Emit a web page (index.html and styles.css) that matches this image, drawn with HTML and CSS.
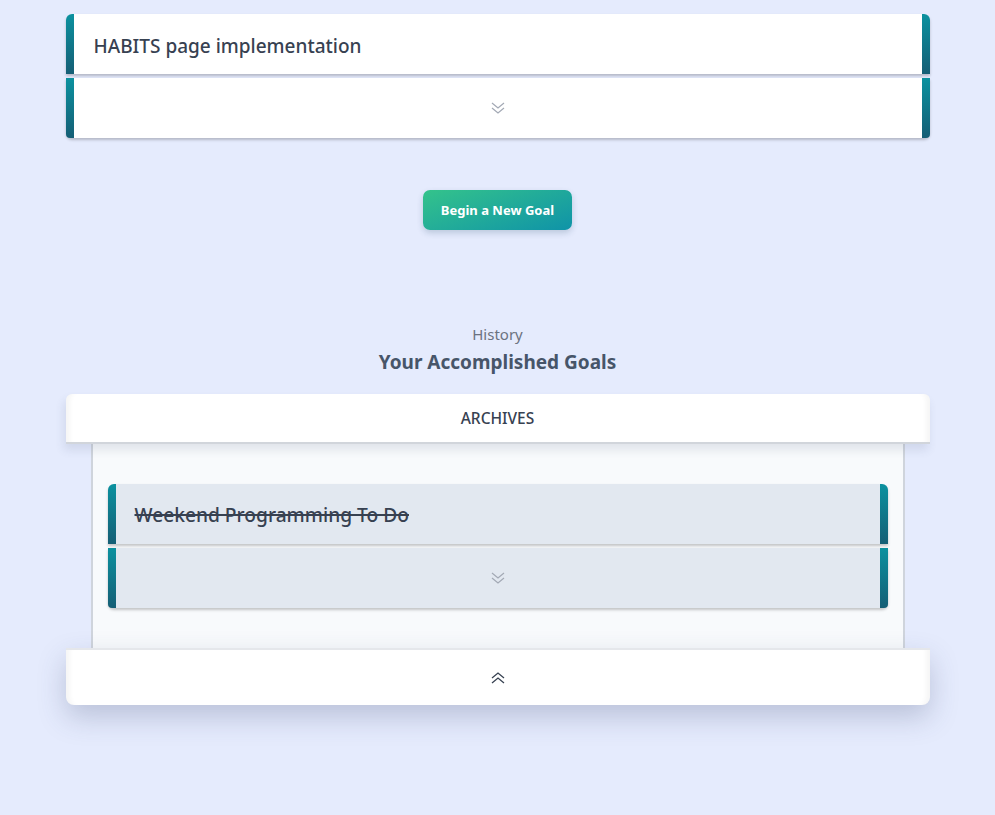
FILE: index.html
```html
<!DOCTYPE html>
<html>
<head>
<meta charset="utf-8">
<link rel="stylesheet" href="styles.css">
</head>
<body>
<main class="page">
  <section class="goal">
    <div class="goal-row goal-top">
      <span class="edge edge-left"></span>
      <div class="goal-body goal-head"><h2 class="goal-title">HABITS page implementation</h2></div>
      <span class="edge edge-right"></span>
    </div>
    <div class="goal-row goal-bottom">
      <span class="edge edge-left"></span>
      <div class="goal-body goal-toggle">
        <svg class="chev chev-light" width="16" height="14" viewBox="0 0 16 14"><path d="M2 2l6 5 6-5M2 7l6 5 6-5" fill="none" stroke="currentColor" stroke-width="1.2"/></svg>
      </div>
      <span class="edge edge-right"></span>
    </div>
  </section>

  <div class="action">
    <button class="btn-new">Begin a New Goal</button>
  </div>

  <header class="history">
    <p class="history-sub">History</p>
    <h1 class="history-title">Your Accomplished Goals</h1>
  </header>

  <section class="archive">
    <div class="archive-head">ARCHIVES</div>
    <div class="archive-panel">
      <section class="goal goal-done">
        <div class="goal-row goal-top">
          <span class="edge edge-left"></span>
          <div class="goal-body"><h2 class="goal-title done">Weekend Programming To Do</h2></div>
          <span class="edge edge-right"></span>
        </div>
        <div class="goal-row goal-bottom">
          <span class="edge edge-left"></span>
          <div class="goal-body goal-toggle">
            <svg class="chev chev-light" width="16" height="14" viewBox="0 0 16 14"><path d="M2 2l6 5 6-5M2 7l6 5 6-5" fill="none" stroke="currentColor" stroke-width="1.2"/></svg>
          </div>
          <span class="edge edge-right"></span>
        </div>
      </section>
    </div>
    <div class="archive-foot">
      <svg class="chev chev-dark" width="16" height="14" viewBox="0 0 16 14"><path d="M2 7l6-5 6 5M2 12l6-5 6 5" fill="none" stroke="currentColor" stroke-width="1.3"/></svg>
    </div>
  </section>
</main>
</body>
</html>
```

FILE: styles.css
```css
* { box-sizing: border-box; }
html, body { margin: 0; padding: 0; }
body {
  background: #e5ebfd;
  font-family: "Noto Sans", "Open Sans", sans-serif;
  color: #374151;
  height: 815px;
  overflow: hidden;
}
.page {
  width: 864px;
  margin: 0 auto;
  padding-top: 14px;
}
.goal { display: flex; flex-direction: column; gap: 4px; }
.goal-row {
  display: flex;
  height: 60px;
  background: #fff;
  box-shadow: 0 2px 3px rgba(0, 0, 0, 0.22);
}
.goal-top { border-radius: 6px 6px 0 0; }
.goal-bottom { border-radius: 0 0 6px 6px; }
.edge {
  width: 8px;
  flex: none;
  background: linear-gradient(180deg, #0b919f 0%, #155e75 100%);
}
.goal-top .edge-left { border-top-left-radius: 6px; }
.goal-top .edge-right { border-top-right-radius: 6px; }
.goal-bottom .edge-left { border-bottom-left-radius: 4px; }
.goal-bottom .edge-right { border-bottom-right-radius: 4px; }
.goal-body {
  flex: 1;
  display: flex;
  align-items: center;
  padding: 0 20px;
}
.goal-head { padding-top: 3px; }
.goal-title {
  margin: 0;
  font-size: 19px;
  font-weight: 500;
  color: #374151;
}
.goal-toggle { justify-content: center; }
.chev { display: block; }
.chev-light { color: #a3a9b5; }
.chev-dark { color: #374151; }

.action {
  display: flex;
  justify-content: center;
  padding-top: 52px;
}
.btn-new {
  width: 149px;
  height: 40px;
  border: 0;
  border-radius: 7px;
  background: linear-gradient(160deg, #34c38b 0%, #0f93a8 100%);
  color: #fff;
  font-family: "Noto Sans", sans-serif;
  font-size: 13px;
  font-weight: 700;
  box-shadow: 0 3px 6px rgba(20, 60, 90, 0.2);
}

.history {
  text-align: center;
  padding-top: 93px;
}
.history-sub {
  margin: 0;
  font-size: 15px;
  color: #6b7280;
  line-height: 22px;
}
.history-title {
  margin: 4px 0 0;
  font-size: 19px;
  font-weight: 700;
  color: #475569;
  line-height: 26px;
}

.archive {
  margin-top: 19px;
  display: flex;
  flex-direction: column;
}
.archive-head {
  height: 50px;
  background: #fff;
  border-radius: 6px 6px 0 0;
  border-bottom: 2px solid #d1d5db;
  box-shadow: inset 8px 0 5px -4px rgba(0, 0, 0, 0.04), inset -8px 0 5px -4px rgba(0, 0, 0, 0.04), -2px 6px 10px rgba(60, 70, 110, 0.12);
  display: flex;
  align-items: center;
  justify-content: center;
  font-size: 15.5px;
  font-weight: 500;
  color: #374151;
  position: relative;
  z-index: 2;
}
.archive-panel {
  margin: 0 25px;
  background: #f8fafc;
  border-left: 2px solid #cfd4dc;
  border-right: 2px solid #cfd4dc;
  padding: 40px 15px 40px;
}
.goal-done .goal-row { background: #e2e8f0; }
.done { text-decoration: line-through; text-decoration-thickness: 2px; }
.goal-done .goal-body { padding: 0 19px; }
.goal-done .goal-title { font-size: 19.2px; }
.archive-foot {
  height: 57px;
  background: #fff;
  border-top: 2px solid #e5e7eb;
  border-radius: 0 0 8px 8px;
  box-shadow: inset 8px 0 5px -4px rgba(0, 0, 0, 0.04), inset -8px 0 5px -4px rgba(0, 0, 0, 0.04), 0 12px 28px rgba(60, 70, 110, 0.25);
  display: flex;
  align-items: center;
  justify-content: center;
}
```
